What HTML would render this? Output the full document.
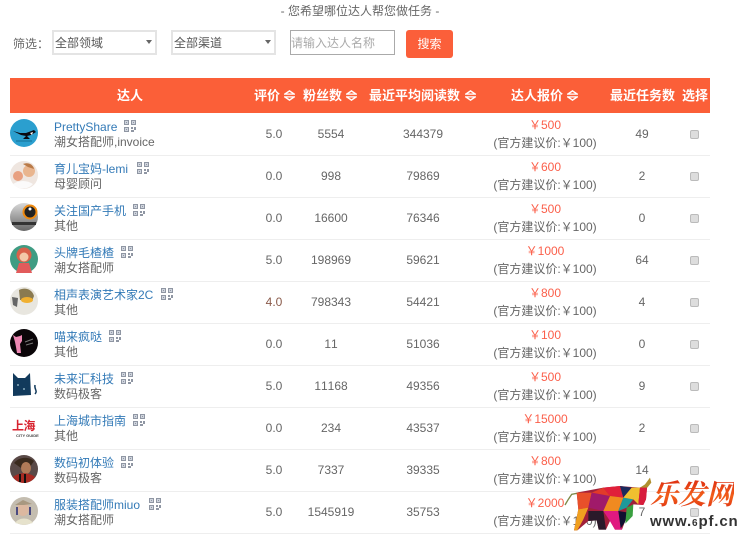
<!DOCTYPE html>
<html lang="zh"><head><meta charset="utf-8"><title>达人</title>
<style>
html,body{margin:0;padding:0;background:#fff}
body{position:relative;width:748px;height:541px;overflow:hidden;font:12px/14px "Liberation Sans","Noto Sans CJK SC",sans-serif;color:#666;font-kerning:none}
.a{position:absolute;white-space:nowrap}
.title{left:0;width:720px;top:4px;text-align:center;color:#666}
.sel{top:30px;width:100px;height:21px;border:2px solid #e4e4e4;line-height:23px;padding-left:1px;color:#555;box-sizing:content-box}
.sel:after{content:"";position:absolute;right:3px;top:8px;border:3px solid transparent;border-top:4px solid #666;border-bottom:0}
.inp{left:290px;top:30px;width:103px;height:23px;border:1px solid #aaa;line-height:25px;color:#aaa}
.btn{left:406px;top:30px;width:47px;height:28px;background:#fb5f3a;border-radius:3px;color:#fff;text-align:center;line-height:29px}
.hd{left:10px;top:78px;width:700px;height:35px;background:#fb5f38}
.h{top:88px;color:#fff;font-weight:bold;font-size:13px;line-height:15px}
.s{top:90px;width:11px;height:11px}
.r{left:0;width:748px;height:42px}
.l{left:10px;width:700px;top:42px;height:1px;background:#eee}
.av{left:10px;top:6px;width:28px;height:28px}
.n{left:54px;top:7px;color:#337ab7}
.q{top:7px;width:12px;height:12px}
.t{left:54px;top:22px;color:#666}
.c{top:14px;text-align:center;transform:translateX(-50%)}
.p{left:545px;top:5px;color:#fb5f4a;transform:translateX(-50%)}
.o{left:545px;top:23px;color:#666;transform:translateX(-50%)}
.k{left:690px;top:17px;width:7px;height:7px;border:1px solid #bbb;background:#ddd;border-radius:2px}
.lg{left:650px;top:475px;font:bold italic 28px/36px "Noto Serif CJK SC","Liberation Serif",serif;letter-spacing:0}
.www{left:650px;top:513px;font:bold 15px/18px "Liberation Sans",sans-serif;color:#333;letter-spacing:.85px}
.www i{font-style:normal;font-size:10px}
</style></head><body>
<svg width="0" height="0" style="position:absolute"><defs>
<symbol id="qr" viewBox="0 0 12 12"><path fill="#8f96a3" d="M0 0h5v5H0zM7 0h5v5H7zM0 7h5v5H0zM7 7h2v2H7zM10 7h2v3h-2zM7 10h3v2H7z"/><path fill="#cfd4dd" d="M1 1h3v3H1zM8 1h3v3H8zM1 8h3v3H1z"/><path fill="#8f96a3" d="M2 2h1v1H2zM9 2h1v1H9zM2 9h1v1H2z"/></symbol>
<symbol id="so" viewBox="0 0 11 11"><path fill="#fff" d="M5.500 0 11 3.800v1H0v-1zM0 6.200h11v1L5.500 11 0 7.200z"/><path fill="#fb5f38" d="M5.500 1.800 8 3.500H3zM3 7.500h5L5.500 9.200z"/></symbol>
</defs></svg>

<div class="a title">- 您希望哪位达人帮您做任务 -</div>
<div class="a" style="left:13px;top:37px">筛选：</div>
<div class="a sel" style="left:52px">全部领域</div>
<div class="a sel" style="left:171px">全部渠道</div>
<div class="a inp">请输入达人名称</div>
<div class="a btn">搜索</div>

<div class="a hd"></div>
<div class="a h" style="left:117px">达人</div>
<div class="a h" style="left:254px">评价</div><svg class="a s" style="left:284px"><use href="#so"/></svg>
<div class="a h" style="left:303px">粉丝数</div><svg class="a s" style="left:346px"><use href="#so"/></svg>
<div class="a h" style="left:369px">最近平均阅读数</div><svg class="a s" style="left:465px"><use href="#so"/></svg>
<div class="a h" style="left:511px">达人报价</div><svg class="a s" style="left:567px"><use href="#so"/></svg>
<div class="a h" style="left:610px">最近任务数</div>
<div class="a h" style="left:682px">选择</div>

<div class="a r" style="top:113px"><div class="a l"></div>
<svg class="a av" viewBox="0 0 28 28"><circle cx="14" cy="14" r="14" fill="#2b9fcf"/><path d="M3 12 10 14h6l8-3 2 2-5 3-4 1 3 3h-7l3-3-5-1z" fill="#0a0a12"/><path d="M20 14l3-1-1 3z" fill="#fff"/><path d="M6 22h16" stroke="#1c7fa8" stroke-width="1.500"/></svg>
<div class="a n">PrettyShare</div><svg class="a q" style="left:124px"><use href="#qr"/></svg><div class="a t">潮女搭配师,invoice</div>
<div class="a c" style="left:274px">5.0</div><div class="a c" style="left:331px">5554</div><div class="a c" style="left:423px">344379</div>
<div class="a p">￥500</div><div class="a o">(官方建议价:￥100)</div><div class="a c" style="left:642px">49</div><div class="a k"></div></div>

<div class="a r" style="top:155px"><div class="a l"></div>
<svg class="a av" viewBox="0 0 28 28"><circle cx="14" cy="14" r="14" fill="#efe6e0"/><circle cx="19" cy="10" r="6" fill="#e9b58e"/><circle cx="8" cy="15" r="5" fill="#e8a080"/><path d="M13 3c5-2 10 0 11 5l-6-2z" fill="#b97a48"/><path d="M3 23c6-4 14-4 20 0-5 6-15 6-20 0z" fill="#fbfafa"/></svg>
<div class="a n">育儿宝妈-lemi</div><svg class="a q" style="left:137px"><use href="#qr"/></svg><div class="a t">母婴顾问</div>
<div class="a c" style="left:274px">0.0</div><div class="a c" style="left:331px">998</div><div class="a c" style="left:423px">79869</div>
<div class="a p">￥600</div><div class="a o">(官方建议价:￥100)</div><div class="a c" style="left:642px">2</div><div class="a k"></div></div>

<div class="a r" style="top:197px"><div class="a l"></div>
<svg class="a av" viewBox="0 0 28 28"><defs><linearGradient id="g1" x1="0" y1="0" x2="0" y2="1"><stop offset="0" stop-color="#d8d8d8"/><stop offset="1" stop-color="#666"/></linearGradient></defs><circle cx="14" cy="14" r="14" fill="url(#g1)"/><circle cx="20" cy="9" r="6.500" fill="#222" stroke="#ef8a10" stroke-width="2"/><circle cx="20" cy="6" r="1.500" fill="#fff"/><path d="M2 19h24v3H2z" fill="#333"/></svg>
<div class="a n">关注国产手机</div><svg class="a q" style="left:133px"><use href="#qr"/></svg><div class="a t">其他</div>
<div class="a c" style="left:274px">0.0</div><div class="a c" style="left:331px">16600</div><div class="a c" style="left:423px">76346</div>
<div class="a p">￥500</div><div class="a o">(官方建议价:￥100)</div><div class="a c" style="left:642px">0</div><div class="a k"></div></div>

<div class="a r" style="top:239px"><div class="a l"></div>
<svg class="a av" viewBox="0 0 28 28"><circle cx="14" cy="14" r="14" fill="#3f9c83"/><circle cx="14" cy="10" r="7.500" fill="#d9614a"/><circle cx="14" cy="12" r="4.500" fill="#f3c8a8"/><path d="M6 28l3-10h10l3 10z" fill="#e25b5b"/></svg>
<div class="a n">头牌毛楂楂</div><svg class="a q" style="left:121px"><use href="#qr"/></svg><div class="a t">潮女搭配师</div>
<div class="a c" style="left:274px">5.0</div><div class="a c" style="left:331px">198969</div><div class="a c" style="left:423px">59621</div>
<div class="a p">￥1000</div><div class="a o">(官方建议价:￥100)</div><div class="a c" style="left:642px">64</div><div class="a k"></div></div>

<div class="a r" style="top:281px"><div class="a l"></div>
<svg class="a av" viewBox="0 0 28 28"><circle cx="14" cy="14" r="14" fill="#e8e6df"/><path d="M9 3c6-3 13-1 15 6l-2 5-12-1z" fill="#8a7a50"/><ellipse cx="17" cy="13" rx="6" ry="3" fill="#f0b030"/><path d="M2 10l6 1-1 9-4-2z" fill="#666"/></svg>
<div class="a n">相声表演艺术家2C</div><svg class="a q" style="left:161px"><use href="#qr"/></svg><div class="a t">其他</div>
<div class="a c" style="left:274px;color:#8a5a4a">4.0</div><div class="a c" style="left:331px">798343</div><div class="a c" style="left:423px">54421</div>
<div class="a p">￥800</div><div class="a o">(官方建议价:￥100)</div><div class="a c" style="left:642px">4</div><div class="a k"></div></div>

<div class="a r" style="top:323px"><div class="a l"></div>
<svg class="a av" viewBox="0 0 28 28"><circle cx="14" cy="14" r="14" fill="#0a0508"/><path d="M3 6l3 2 4-1 2-1v6l-2 3 1 9H7l-1-6-1-5z" fill="#ee88b4"/><path d="M15 13l8-3M16 16l7-2" stroke="#777"/></svg>
<div class="a n">喵来疯哒</div><svg class="a q" style="left:109px"><use href="#qr"/></svg><div class="a t">其他</div>
<div class="a c" style="left:274px">0.0</div><div class="a c" style="left:331px">11</div><div class="a c" style="left:423px">51036</div>
<div class="a p">￥100</div><div class="a o">(官方建议价:￥100)</div><div class="a c" style="left:642px">0</div><div class="a k"></div></div>

<div class="a r" style="top:365px"><div class="a l"></div>
<svg class="a av" viewBox="0 0 28 28"><path d="M3 2l5 5h7l5-5 1 22-18 1z" fill="#123a5c"/><circle cx="8" cy="14" r="1" fill="#8ab"/><circle cx="14" cy="18" r="1" fill="#8ab"/><path d="M25 23c3-3-1-5 0-9" fill="none" stroke="#123a5c" stroke-width="1.500"/></svg>
<div class="a n">未来汇科技</div><svg class="a q" style="left:121px"><use href="#qr"/></svg><div class="a t">数码极客</div>
<div class="a c" style="left:274px">5.0</div><div class="a c" style="left:331px">11168</div><div class="a c" style="left:423px">49356</div>
<div class="a p">￥500</div><div class="a o">(官方建议价:￥100)</div><div class="a c" style="left:642px">9</div><div class="a k"></div></div>

<div class="a r" style="top:407px"><div class="a l"></div>
<div class="a av" style="background:#fff"><div class="a" style="left:2px;top:6px;font:bold 12px/14px 'Noto Sans CJK SC',sans-serif;color:#d8232f;letter-spacing:-.5px">上海</div><div class="a" style="left:6px;top:20px;font:bold 4px/5px 'Liberation Sans',sans-serif;color:#444">CITY GUIDE</div></div>
<div class="a n">上海城市指南</div><svg class="a q" style="left:133px"><use href="#qr"/></svg><div class="a t">其他</div>
<div class="a c" style="left:274px">0.0</div><div class="a c" style="left:331px">234</div><div class="a c" style="left:423px">43537</div>
<div class="a p">￥15000</div><div class="a o">(官方建议价:￥100)</div><div class="a c" style="left:642px">2</div><div class="a k"></div></div>

<div class="a r" style="top:449px"><div class="a l"></div>
<svg class="a av" viewBox="0 0 28 28"><circle cx="14" cy="14" r="14" fill="#5a4a48"/><path d="M4 8c5-6 14-7 20-2l-4 6-9 1z" fill="#3a2a1e"/><ellipse cx="16" cy="13" rx="5" ry="6" fill="#b07a58"/><path d="M3 22c6-5 16-5 22 0-5 8-17 8-22 0z" fill="#a82a22"/><path d="M10 19v8M15 19v9" stroke="#111" stroke-width="2"/></svg>
<div class="a n">数码初体验</div><svg class="a q" style="left:121px"><use href="#qr"/></svg><div class="a t">数码极客</div>
<div class="a c" style="left:274px">5.0</div><div class="a c" style="left:331px">7337</div><div class="a c" style="left:423px">39335</div>
<div class="a p">￥800</div><div class="a o">(官方建议价:￥100)</div><div class="a c" style="left:642px">14</div><div class="a k"></div></div>

<div class="a r" style="top:491px"><div class="a l"></div>
<svg class="a av" viewBox="0 0 28 28"><circle cx="14" cy="14" r="14" fill="#c4bdb0"/><ellipse cx="13" cy="12" rx="6" ry="7" fill="#dcb8a0"/><path d="M5 8l8-5 9 4-8 1z" fill="#a89880"/><path d="M7 10v8M20 10v8" stroke="#4a4a80" stroke-width="2"/><path d="M5 26c4-6 14-6 18 0l-9 2z" fill="#e6e2cc"/></svg>
<div class="a n">服装搭配师miuo</div><svg class="a q" style="left:149px"><use href="#qr"/></svg><div class="a t">潮女搭配师</div>
<div class="a c" style="left:274px">5.0</div><div class="a c" style="left:331px">1545919</div><div class="a c" style="left:423px">35753</div>
<div class="a p">￥2000</div><div class="a o">(官方建议价:￥100)</div><div class="a c" style="left:642px">7</div><div class="a k"></div></div>

<svg class="a" style="left:0;top:0" width="748" height="541" viewBox="0 0 748 541"><g transform="translate(560 441) scale(.3333)">
<path d="M60 155 35 160 25 175 15 192" fill="none" stroke="#7c8a48" stroke-width="4"/>
<polygon points="50,155 130,140 180,135 240,140 262,130 258,175 250,192 220,190 205,215 186,266 165,266 150,240 138,266 116,266 110,238 85,240 52,268 42,268 55,205" fill="#a0203a"/>
<polygon points="50,155 95,155 85,200 55,205" fill="#e8502a"/>
<polygon points="55,205 85,200 70,235 52,268 42,268" fill="#f0a020"/>
<polygon points="95,155 150,165 130,210 85,200" fill="#a01a6a"/>
<polygon points="95,155 130,140 150,165" fill="#e23a2a"/>
<polygon points="130,140 180,135 190,170 150,165" fill="#e0203a"/>
<polygon points="180,135 215,140 190,170" fill="#1d2a5c"/>
<polygon points="150,165 190,170 175,210 130,210" fill="#f08a20"/>
<polygon points="190,170 220,175 200,200 175,210" fill="#1d9a9a"/>
<polygon points="215,140 240,140 235,190 220,175 190,170" fill="#f0c030"/>
<polygon points="240,140 262,130 258,175 250,192 235,190" fill="#d81c3c"/>
<polygon points="240,140 255,130 270,110 274,125 262,140" fill="#b09030"/>
<polygon points="85,210 130,210 138,266 116,266 110,238 85,240" fill="#2a1a2a"/>
<polygon points="130,210 175,210 186,266 165,266 150,240" fill="#e01a80"/>
<polygon points="175,210 205,215 194,245 182,262" fill="#101030"/>
<polygon points="200,200 220,190 218,225 196,248" fill="#3aa040"/>
</g></svg>
<div class="a lg" style="background:linear-gradient(#d8200f,#f2601a 60%,#dc2a12);-webkit-background-clip:text;color:transparent">乐发网</div>
<div class="a www">www.<i>6</i>pf.cn</div>
</body></html>
